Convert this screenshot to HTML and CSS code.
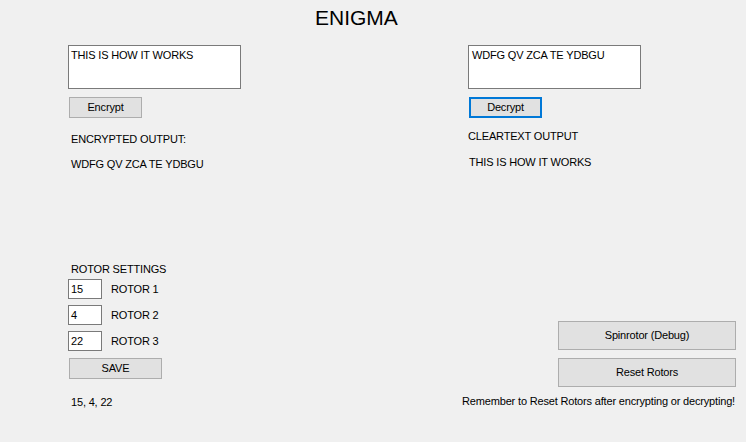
FILE: index.html
```html
<!DOCTYPE html>
<html>
<head>
<meta charset="utf-8">
<link rel="stylesheet" href="styles.css">
</head>
<body>
<div class="window">
  <div class="title">ENIGMA</div>
  <div class="top">
    <div class="col col-left">
      <div class="textbox">THIS IS HOW IT WORKS</div>
      <div class="btn btn-small">Encrypt</div>
      <div class="label label-out">ENCRYPTED OUTPUT:</div>
      <div class="label label-res">WDFG QV ZCA TE YDBGU</div>
    </div>
    <div class="col col-right">
      <div class="textbox">WDFG QV ZCA TE YDBGU</div>
      <div class="btn btn-small btn-focus">Decrypt</div>
      <div class="label label-out2">CLEARTEXT OUTPUT</div>
      <div class="label label-res2">THIS IS HOW IT WORKS</div>
    </div>
  </div>
  <div class="bottom">
    <div class="rotors">
      <div class="label label-rs">ROTOR SETTINGS</div>
      <div class="rotor-list">
        <div class="rotor"><div class="num">15</div><span class="rlabel">ROTOR 1</span></div>
        <div class="rotor"><div class="num">4</div><span class="rlabel">ROTOR 2</span></div>
        <div class="rotor"><div class="num">22</div><span class="rlabel">ROTOR 3</span></div>
      </div>
      <div class="btn btn-save">SAVE</div>
      <div class="label label-vals">15, 4, 22</div>
    </div>
    <div class="actions">
      <div class="btn btn-wide">Spinrotor (Debug)</div>
      <div class="btn btn-wide">Reset Rotors</div>
      <div class="label label-note">Remember to Reset Rotors after encrypting or decrypting!</div>
    </div>
  </div>
</div>
</body>
</html>
```
FILE: styles.css
```css
html, body {
  margin: 0;
  padding: 0;
  background: #f0f0f0;
}
body {
  font-family: "Liberation Sans", Arial, sans-serif;
  font-size: 11px;
  line-height: 13px;
  letter-spacing: -0.17px;
  color: #000;
}
.window {
  width: 746px;
  height: 442px;
  overflow: hidden;
}
.title {
  padding: 6px 0 0 315px;
  height: 24px;
  font-size: 21px;
  line-height: 24px;
  letter-spacing: 0;
}
.top {
  margin-top: 15px;
  height: 218px;
  display: flex;
}
.col-left {
  padding-left: 68px;
  width: 400px;
}
.col-right {
  width: 278px;
}
.textbox {
  box-sizing: border-box;
  width: 173px;
  height: 44px;
  background: #fff;
  border: 1px solid #7a7a7a;
  padding: 3px 0 0 2px;
}
.col-right .textbox {
  padding-left: 3px;
}
.btn {
  box-sizing: border-box;
  background: #e1e1e1;
  border: 1px solid #adadad;
  display: flex;
  align-items: center;
  justify-content: center;
}
.btn-small {
  width: 73px;
  height: 21px;
  margin: 8px 0 0 1px;
}
.btn-focus {
  border: 2px solid #0078d7;
}
.label-out {
  margin-top: 15px;
  padding-left: 3px;
}
.label-res {
  margin-top: 12px;
  padding-left: 3px;
}
.label-out2 {
  margin-top: 12px;
}
.label-res2 {
  margin-top: 13px;
  padding-left: 1px;
}
.bottom {
  display: flex;
  justify-content: space-between;
}
.rotors {
  padding-left: 68px;
}
.label-rs {
  padding-left: 3px;
}
.rotor-list {
  margin-top: 3px;
  display: flex;
  flex-direction: column;
  gap: 6px;
}
.rotor {
  display: flex;
  align-items: center;
  gap: 9px;
}
.num {
  box-sizing: border-box;
  width: 34px;
  height: 20px;
  background: #fff;
  border: 1px solid #7a7a7a;
  padding: 3px 0 0 2px;
}
.btn-save {
  width: 93px;
  height: 21px;
  margin: 7px 0 0 1px;
}
.label-vals {
  margin-top: 17px;
  padding-left: 3px;
}
.actions {
  padding: 58px 10px 0 0;
  display: flex;
  flex-direction: column;
  align-items: flex-end;
}
.btn-wide {
  width: 178px;
  height: 29px;
  margin-bottom: 8px;
}
.label-note {
  padding-right: 1px;
}
```
